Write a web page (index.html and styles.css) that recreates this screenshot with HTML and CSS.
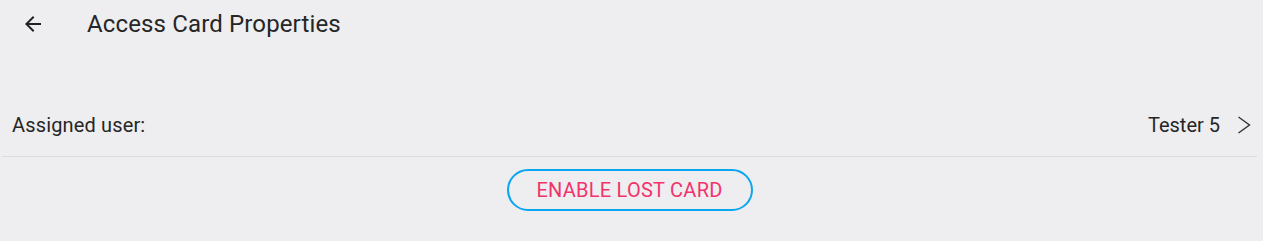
FILE: index.html
```html
<!DOCTYPE html>
<html>
<head>
<meta charset="utf-8">
<link rel="stylesheet" href="styles.css">
</head>
<body>
<div class="page">
  <header class="topbar">
    <button class="back" aria-label="Back">
      <svg width="24" height="24" viewBox="0 0 24 24"><path d="M20 11H7.83l5.59-5.59L12 4l-8 8 8 8 1.41-1.41L7.83 13H20v-2z" fill="#222"/></svg>
    </button>
    <h1 class="title">Access Card Properties</h1>
  </header>
  <div class="row">
    <span class="label">Assigned user:</span>
    <span class="value">Tester 5
      <svg class="chev" width="14" height="18" viewBox="0 0 14 18"><path d="M1.5 1L12.5 9 1.5 17" fill="none" stroke="#333" stroke-width="1.4"/></svg>
    </span>
  </div>
  <div class="actions">
    <button class="outline">ENABLE LOST CARD</button>
  </div>
</div>
</body>
</html>
```
FILE: styles.css
```css
html, body { margin: 0; padding: 0; background: #eeedf0; }
body { font-family: Roboto, "Noto Sans", sans-serif; color: #222; }
.page { width: 1263px; height: 241px; }
.topbar { display: flex; align-items: center; height: 48px; }
.back { background: none; border: 0; padding: 0; margin-left: 21px; width: 24px; height: 24px; display: flex; }
.title { font-size: 24px; font-weight: 400; letter-spacing: 0.14px; margin: 0 0 0 42px; color: #262626; }
.row { display: flex; justify-content: space-between; align-items: center; margin: 46px 6px 0 2px; padding: 0 6px 0 10px; height: 62px; border-bottom: 1px solid #dcdcdf; }
.label { font-size: 20px; letter-spacing: 0.15px; color: #262626; }
.value { display: flex; align-items: center; gap: 17px; font-size: 20px; color: #262626; }
.actions { display: flex; justify-content: center; padding-top: 12px; }
.outline { margin-left: -4px; width: 246px; height: 42px; border: 2px solid #0aa6ef; border-radius: 21px; background: transparent; color: #f3336b; font-family: Roboto, sans-serif; font-size: 20px; letter-spacing: 0.25px; }
```
